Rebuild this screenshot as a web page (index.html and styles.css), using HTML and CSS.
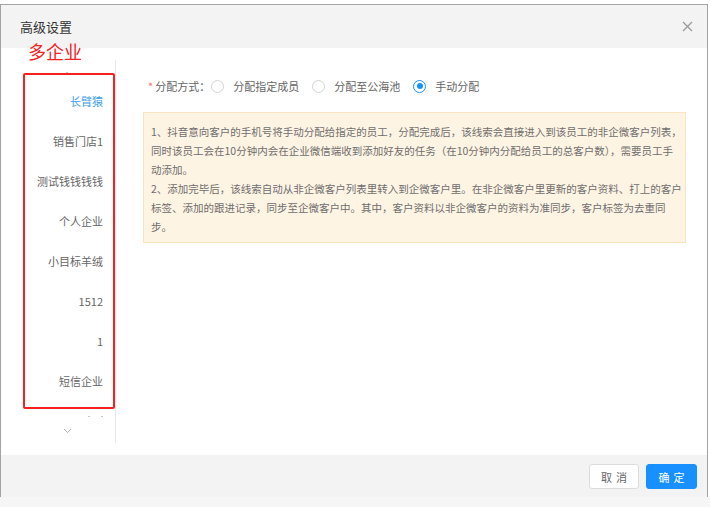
FILE: index.html
```html
<!DOCTYPE html>
<html lang="zh-CN">
<head>
  <meta charset="UTF-8">
  <meta name="viewport" content="width=device-width, initial-scale=1.0">
  <title>高级设置</title>
  <link rel="stylesheet" href="styles.css">
</head>
<body>
  <div class="dialog" role="dialog" aria-labelledby="dialog-title">
    <div class="dialog-header">
      <span id="dialog-title" class="dialog-title">高级设置</span>
      <button class="dialog-close" aria-label="关闭">
        <svg width="11" height="11" viewBox="0 0 11 11"><path d="M1 1 L10 10 M10 1 L1 10" stroke="#9a9a9a" stroke-width="1.3" fill="none"/></svg>
      </button>
    </div>

    <div class="dialog-body">
      <!-- Enterprise list -->
      <aside class="corp-list">
        <div class="corp-scroll-top"><span class="scroll-dot"></span></div>
        <ul class="corp-items">
          <li class="corp-item active">长臂猿</li>
          <li class="corp-item">销售门店1</li>
          <li class="corp-item">测试钱钱钱钱</li>
          <li class="corp-item">个人企业</li>
          <li class="corp-item">小目标羊绒</li>
          <li class="corp-item">1512</li>
          <li class="corp-item">1</li>
          <li class="corp-item">短信企业</li>
        </ul>
        <div class="corp-scroll-bottom">
          <div class="scroll-dots"><span class="scroll-dot"></span><span class="scroll-dot"></span></div>
          <svg class="scroll-down" width="9" height="6" viewBox="0 0 9 6"><path d="M1 1 L4.5 4.5 L8 1" stroke="#b0b0b0" stroke-width="1" fill="none"/></svg>
        </div>
      </aside>

      <!-- Settings -->
      <div class="settings">
        <div class="form-row">
          <span class="form-label"><span class="required">*</span>分配方式：</span>
          <label class="radio"><span class="radio-circle"></span>分配指定成员</label>
          <label class="radio"><span class="radio-circle"></span>分配至公海池</label>
          <label class="radio checked"><span class="radio-circle"></span>手动分配</label>
        </div>

        <div class="notice">
          <p>1、抖音意向客户的手机号将手动分配给指定的员工，分配完成后，该线索会直接进入到该员工的非企微客户列表，<br>同时该员工会在10分钟内会在企业微信端收到添加好友的任务（在10分钟内分配给员工的总客户数），需要员工手<br>动添加。</p>
          <p>2、添加完毕后，该线索自动从非企微客户列表里转入到企微客户里。在非企微客户里更新的客户资料、打上的客户<br>标签、添加的跟进记录，同步至企微客户中。其中，客户资料以非企微客户的资料为准同步，客户标签为去重同<br>步。</p>
        </div>
      </div>
    </div>

    <div class="dialog-footer">
      <button class="btn">取消</button>
      <button class="btn btn-primary">确定</button>
    </div>
  </div>
  <div class="page-bottom"></div>

  <!-- annotation overlay -->
  <div class="annot-label">多企业</div>
  <div class="annot-box"></div>
</body>
</html>
```

FILE: styles.css
```css
:root {
  --primary-color: #1890ff;
  --text-color: #666;
  --border-color: #e8e8e8;
  --gray-bg: #f3f3f3;
  --annot-red: #f5221f;
}

body {
  margin: 0;
  padding-top: 4px;
  font-family: "Noto Sans CJK SC", "Noto Sans", sans-serif;
  color: var(--text-color);
  background: #fff;
  position: relative;
}

ul {
  list-style: none;
  margin: 0;
  padding: 0;
}

p {
  margin: 0;
}

button {
  font-family: inherit;
  cursor: pointer;
}

/* Dialog */
.dialog {
  width: 708px;
  box-sizing: border-box;
  border: 1px solid #a3a3a3;
  border-bottom: none;
  background: #fff;
}

.dialog-header {
  height: 43px;
  background: var(--gray-bg);
  display: flex;
  align-items: center;
  justify-content: space-between;
  padding: 0 14px 0 19px;
}

.dialog-title {
  font-size: 13px;
  color: #333;
}

.dialog-close {
  background: none;
  border: none;
  padding: 0;
  display: flex;
}

.dialog-body {
  display: flex;
  height: 407px;
  box-sizing: border-box;
  padding: 12px 0;
}

/* Enterprise list */
.corp-list {
  width: 114px;
  flex-shrink: 0;
  border-right: 1px solid var(--border-color);
  display: flex;
  flex-direction: column;
}

.corp-scroll-top {
  height: 21px;
  position: relative;
}

.corp-scroll-top .scroll-dot {
  position: absolute;
  left: 65px;
  top: 12px;
}

.scroll-dot {
  display: inline-block;
  width: 2px;
  height: 1px;
  background: #c8c8c8;
}

.corp-item {
  height: 40px;
  line-height: 40px;
  text-align: right;
  padding-right: 12px;
  font-size: 11px;
  color: var(--text-color);
  white-space: nowrap;
}

.corp-item.active {
  color: #3d9cf0;
}

.corp-scroll-bottom {
  height: 42px;
  display: flex;
  flex-direction: column;
  align-items: flex-start;
}

.scroll-dots {
  display: flex;
  gap: 11px;
  padding: 15px 0 0 87px;
}

.scroll-down {
  margin: 11px 0 0 62px;
}

/* Settings */
.settings {
  flex: 1;
  min-width: 0;
  padding: 16px 21px 0 27px;
}

.form-row {
  display: flex;
  align-items: center;
  height: 20px;
  font-size: 11px;
}

.form-label {
  margin-left: 5px;
  margin-right: 1px;
  color: var(--text-color);
}

.required {
  color: #f56c6c;
  margin-right: 2px;
}

.radio {
  display: inline-flex;
  align-items: center;
  gap: 9px;
  margin-right: 13px;
  color: var(--text-color);
}

.radio-circle {
  width: 13px;
  height: 13px;
  box-sizing: border-box;
  border: 1px solid #d4d4d4;
  border-radius: 50%;
  background: #fff;
  position: relative;
}

.radio.checked .radio-circle {
  border-color: var(--primary-color);
}

.radio.checked .radio-circle::after {
  content: "";
  position: absolute;
  left: 2.5px;
  top: 2.5px;
  width: 6px;
  height: 6px;
  border-radius: 50%;
  background: var(--primary-color);
}

.notice {
  margin-top: 16px;
  background: #fef4e3;
  border: 1px solid #fbe4c2;
  padding: 9px 6px 6px 7px;
  font-size: 10.5px;
  line-height: 19px;
  color: #6e6e6e;
  white-space: nowrap;
  overflow: hidden;
}

/* Footer */
.dialog-footer {
  height: 42px;
  background: var(--gray-bg);
  display: flex;
  justify-content: flex-end;
  align-items: flex-start;
  gap: 7px;
  padding: 9px 10px 0 0;
  box-sizing: border-box;
}

.btn {
  width: 50px;
  height: 25px;
  font-size: 11px;
  letter-spacing: 4px;
  padding: 0 0 0 4px;
  border-radius: 3px;
  border: 1px solid #dcdcdc;
  background: #fff;
  color: #666;
}

.btn-primary {
  width: 51px;
  background: var(--primary-color);
  border-color: var(--primary-color);
  color: #fff;
}

.page-bottom {
  height: 10px;
  background: #f6f6f6;
}

/* Annotation overlay */
.annot-label {
  position: absolute;
  left: 28px;
  top: 40px;
  font-size: 18px;
  line-height: 22px;
  color: var(--annot-red);
}

.annot-box {
  position: absolute;
  left: 23px;
  top: 73px;
  width: 92px;
  height: 336px;
  box-sizing: border-box;
  border: 2px solid var(--annot-red);
  border-radius: 2px;
}
```
